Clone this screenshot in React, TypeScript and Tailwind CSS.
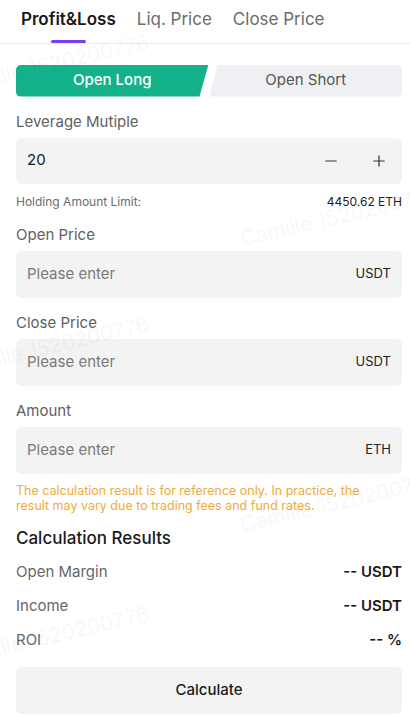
import { Minus, Plus } from 'lucide-react';

const marks = [
  { pos: 'top-[76px] left-[-46px]' },
  { pos: 'top-[228px] left-[243px]' },
  { pos: 'top-[358px] left-[-46px]' },
  { pos: 'top-[514px] left-[243px]' },
  { pos: 'top-[648px] left-[-46px]' },
];

function InputField({ label, unit }: { label: string; unit: string }) {
  return (
    <div className="flex flex-col">
      <div className="mt-[15px] text-[15px] leading-[20px] text-[#5f5f5f]">{label}</div>
      <div className="mt-[6px] h-[47px] rounded-[6px] bg-[#f3f3f3] px-[11px] flex items-center justify-between">
        <span className="text-[15px] text-[#7a7a7a]">Please enter</span>
        <span className="text-[13px] text-[#222]">{unit}</span>
      </div>
    </div>
  );
}

function ResultRow({ label, value, className }: { label: string; value: string; className: string }) {
  return (
    <div className={`flex items-center justify-between h-[20px] ${className}`}>
      <span className="text-[15px] text-[#666]">{label}</span>
      <span className="text-[15px] font-semibold text-[#1a1a1a]">{value}</span>
    </div>
  );
}

export default function App() {
  return (
    <div className="relative w-full min-h-[716px] bg-white overflow-hidden font-['Inter',_'Noto_Sans',_sans-serif]">
      {/* Tabs */}
      <div className="flex gap-[21px] px-[21px] border-b border-[#ececec]">
        <div className="flex flex-col items-center pt-[8px]">
          <span className="text-[17px] leading-[22px] font-semibold text-[#1a1a1a]">Profit&amp;Loss</span>
          <div className="mt-[10px] h-[2.5px] w-[35px] rounded-full bg-[#7b3ff2]" />
        </div>
        <div className="pt-[8px] text-[17px] leading-[22px] text-[#6b6b6b]">Liq. Price</div>
        <div className="pt-[8px] text-[17px] leading-[22px] text-[#6b6b6b]">Close Price</div>
      </div>

      <div className="pl-4 pr-2 flex flex-col">
        {/* Long / Short toggle */}
        <div className="mt-[21px] flex gap-[1px] h-[32px]">
          <div className="flex-1 rounded-l-[5px] bg-[#13b28b] text-white text-[15px] font-medium flex items-center justify-center [clip-path:polygon(0_0,100%_0,calc(100%-9px)_100%,0_100%)]">
            Open Long
          </div>
          <div className="flex-1 rounded-r-[5px] bg-[#eef0f3] text-[#555] text-[15px] flex items-center justify-center [clip-path:polygon(8px_0,100%_0,100%_100%,0_100%)]">
            Open Short
          </div>
        </div>

        {/* Leverage */}
        <div className="mt-[15px] text-[15px] leading-[20px] text-[#5f5f5f]">Leverage Mutiple</div>
        <div className="mt-[6px] h-[46px] rounded-[6px] bg-[#f3f3f3] pl-[11px] pr-[14px] flex items-center justify-between">
          <span className="text-[15px] text-[#1a1a1a]">20</span>
          <div className="flex items-center gap-[30px] text-[#333]">
            <Minus size={18} strokeWidth={1.6} />
            <Plus size={18} strokeWidth={1.6} />
          </div>
        </div>
        <div className="mt-[10px] h-[16px] flex items-center justify-between text-[12px]">
          <span className="text-[#6b6b6b]">Holding Amount Limit:</span>
          <span className="text-[#222]">4450.62 ETH</span>
        </div>

        <InputField label="Open Price" unit="USDT" />
        <InputField label="Close Price" unit="USDT" />
        <InputField label="Amount" unit="ETH" />

        <p className="mt-[9px] text-[12.5px] leading-[15px] text-[#f1aa3c] pr-[30px]">
          The calculation result is for reference only. In practice, the result may vary due to trading fees and fund rates.
        </p>

        <div className="mt-[13px] text-[17px] leading-[24px] font-medium text-[#1a1a1a]">Calculation Results</div>
        <ResultRow className="mt-[13px]" label="Open Margin" value="-- USDT" />
        <ResultRow className="mt-[14px]" label="Income" value="-- USDT" />
        <ResultRow className="mt-[14px]" label="ROI" value="-- %" />

        <button className="mt-[16px] h-[47px] rounded-[6px] bg-[#f3f3f3] text-[15px] font-medium text-[#1a1a1a]">
          Calculate
        </button>
      </div>

      {/* Watermarks */}
      {marks.map((m, i) => (
        <div
          key={i}
          className={`absolute ${m.pos} pointer-events-none select-none whitespace-nowrap text-[21px] leading-[21px] text-black/[0.05] -rotate-[13deg] origin-bottom-left`}
        >
          Camille 1520200776
        </div>
      ))}
    </div>
  );
}
